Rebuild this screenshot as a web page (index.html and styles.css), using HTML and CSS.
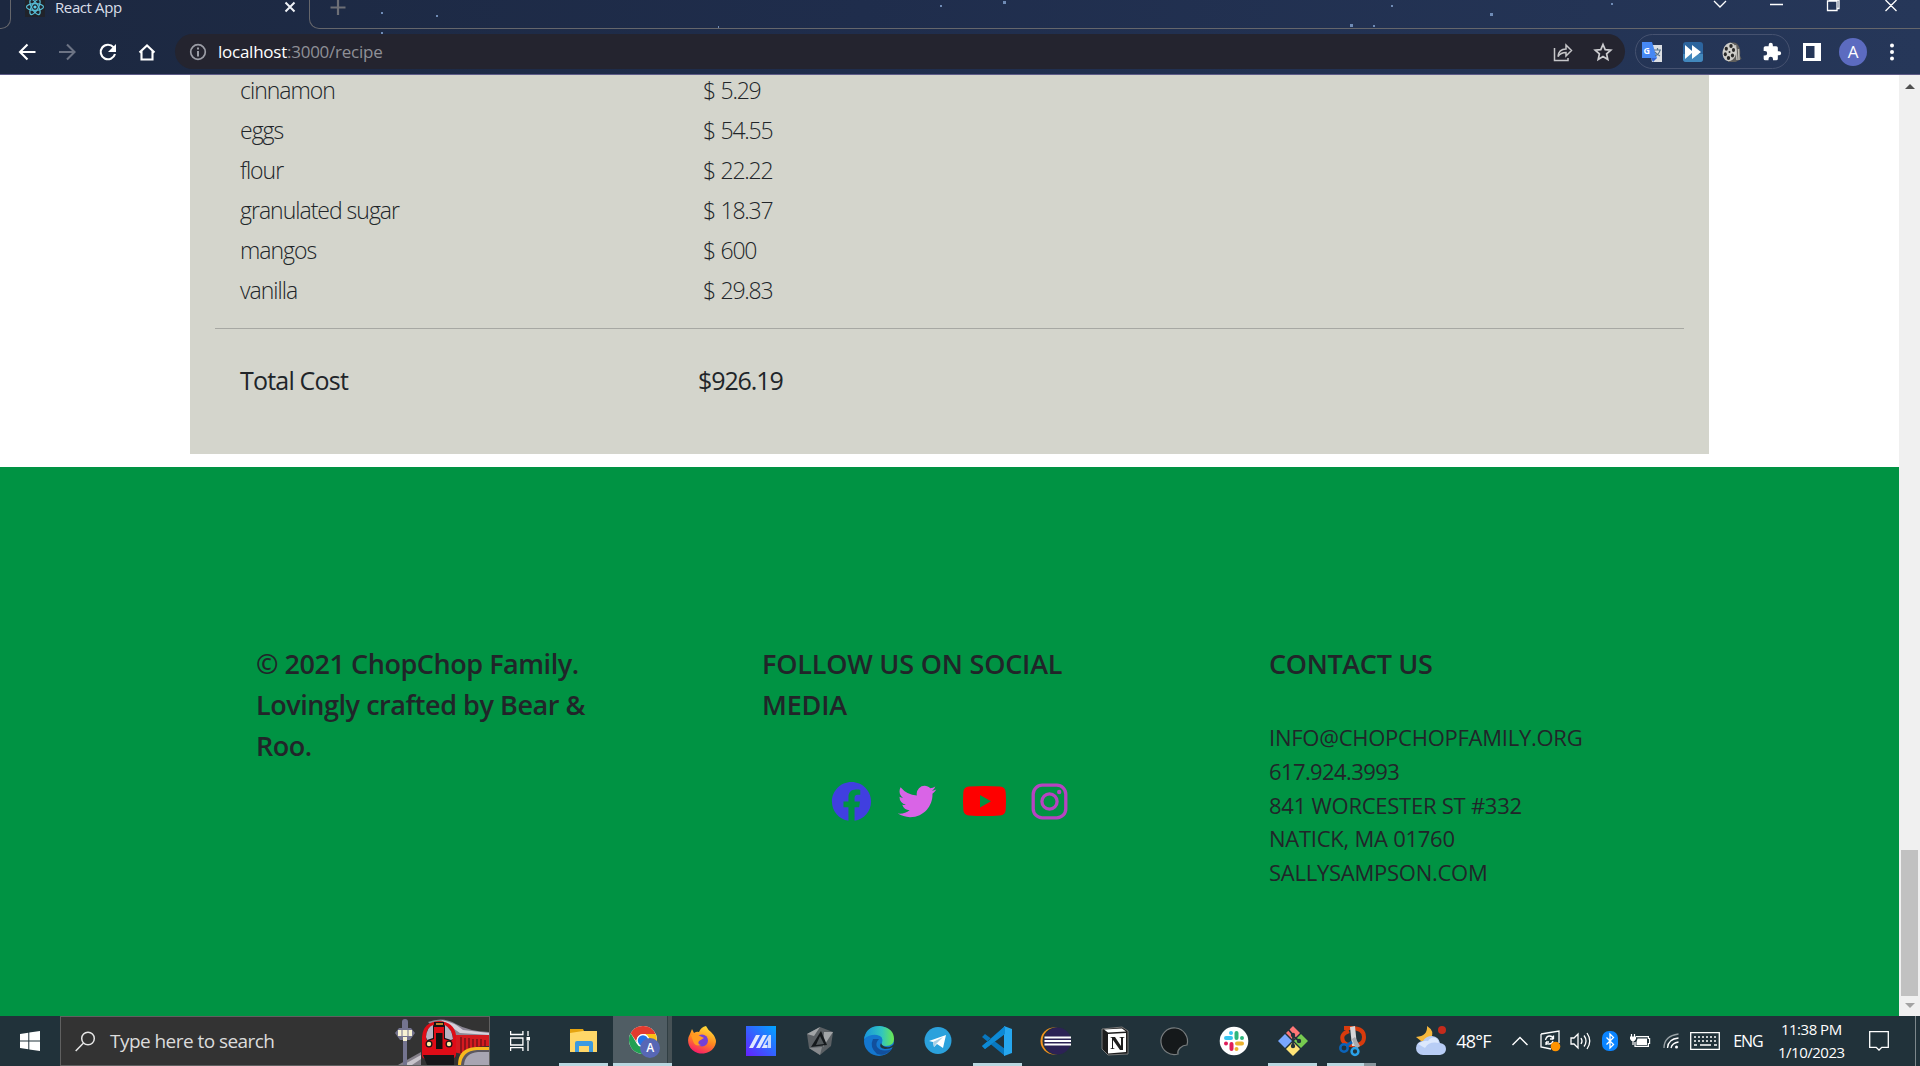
FILE: index.html
```html
<!DOCTYPE html>
<html lang="en">
<head>
<meta charset="utf-8">
<title>React App</title>
<link rel="stylesheet" href="styles.css">
</head>
<body>
<div class="screen">
  <header class="chrome">
    <svg class="stars" width="1920" height="36" viewBox="0 0 1920 36" fill="#6f8bb5"><path d="M381 12h2v2h-2zM436 15h2v2h-2zM381 32h2v2h-2zM718 26h1v2h-1zM940 5h2v2h-2zM1003 1h3v3h-3zM1350 24h3v3h-3zM1373 25h2v2h-2zM1391 5h2v2h-2zM1490 13h3v3h-3zM1611 3h2v2h-2z"/></svg>
    <div class="tabstrip">
      <div class="edge edge-left"></div>
      <div class="tab">
        <svg width="20" height="18" viewBox="0 0 20 18"><path fill="#20232a" d="M0 0h20v17H0z"/><g fill="none" stroke="#58bfd8" stroke-width="1.2"><ellipse cx="10" cy="7" rx="8.5" ry="3.3"/><ellipse cx="10" cy="7" rx="8.5" ry="3.3" transform="rotate(60 10 7)"/><ellipse cx="10" cy="7" rx="8.5" ry="3.3" transform="rotate(120 10 7)"/></g><circle cx="10" cy="7" r="1.6" fill="#58d2ef"/></svg>
        <span class="tab-title">React App</span>
        <svg class="tab-close" width="12" height="14" viewBox="0 0 12 14"><path d="M1.5 2.5l9 9m0-9l-9 9" stroke="#eef1f6" stroke-width="2"/></svg>
      </div>
      <div class="edge edge-right">
        <svg width="16" height="16" viewBox="0 0 16 16"><path d="M8 0v15M0.5 7.500h15" stroke="#6d6f76" stroke-width="2.200"/></svg>
        <svg width="190" height="14" viewBox="0 0 190 14" fill="none" stroke="#fff" stroke-width="1.3"><path d="M4 1l6 6 6-6M60 4.500h13M117.500 1h9.500v9.500h-9.500zM119 0h10v8.500h-2M175.500 0l11 11m0-11l-11 11"/></svg>
      </div>
    </div>
    <div class="toolbar">
      <svg class="nav" width="140" height="24" viewBox="0 0 140 24" fill="none" stroke="#fff" stroke-width="2.100"><path d="M17.500 12H2m7.500-7.500L2 12l7.500 7.500"/><path stroke="#6c7384" d="M41 12h15.500m-7.500-7.500l7.500 7.500-7.500 7.500"/><path d="M95.500 7.200A7.300 7.300 0 1 0 97 14"/><path fill="#fff" stroke="none" d="M98 4v8h-8z"/><path d="M121.500 12.500l7.500-7 7.500 7m-13-1.500v8.500h11V11"/></svg>
      <div class="omnibox">
        <svg width="18" height="18" viewBox="0 0 18 18"><circle cx="9" cy="9" r="7.300" fill="none" stroke="#9b9da6" stroke-width="1.700"/><path d="M8 4.500h2v2H8zM8 8h2v5.500H8z" fill="#9b9da6"/></svg>
        <span class="url"><span class="host">localhost</span>:3000/recipe</span>
        <svg class="share" width="20" height="20" viewBox="0 0 20 20" fill="none" stroke="#c6c6c9" stroke-width="1.500"><path d="M1.500 6v12.500H15V16M5 14.500c.5-5 3-7.500 8-7.500V3l5.500 5.500L13 14v-3.500c-4 0-6 1-8 4z"/></svg>
        <svg class="star" width="20" height="20" viewBox="0 0 20 20"><path d="M10 2.500l2.200 5.200 5.600.5-4.200 3.700 1.200 5.500-4.800-2.900-4.800 2.900 1.200-5.500-4.200-3.700 5.600-.5z" fill="none" stroke="#cdcdd0" stroke-width="1.700"/></svg>
      </div>
      <div class="extensions">
        <svg width="22" height="22" viewBox="0 0 22 22"><path fill="#dcdfe3" d="M8 4h13v17H11z"/><path fill="#3367d6" d="M10 17h6l-4 4z"/><path fill="#4688f4" d="M1 1h10l5 16H1z"/><text x="2.600" y="13" class="g-letter">G</text><path d="M13 9h7m-3.500-2v2m2.500 0c-.5 3-3 5-5 6m0-4c1 2 3 3 5 4" stroke="#57748c" stroke-width="1.200" fill="none"/></svg>
        <svg width="20" height="20" viewBox="0 0 20 20"><rect width="20" height="20" rx="3" fill="#2c649e"/><path fill="#4288bd" d="M0 12h20v5a3 3 0 0 1-3 3H3a3 3 0 0 1-3-3z"/><path fill="#fff" d="M2 3l7 6V3l9 7-9 7v-6l-7 6z"/></svg>
        <svg width="20" height="20" viewBox="0 0 20 20"><path fill="#5f5e5c" d="M7 .5h5c5 1 7 7 6 13l1.500 3.500-6 3H6z"/><path stroke="#bdbbb5" stroke-width="1.500" d="M13.500 3l1.500 15M16.500 7l.5 11" fill="none"/><ellipse cx="7.500" cy="10" rx="6.800" ry="9.300" transform="rotate(12 7.500 10)" fill="#cfceca"/><g fill="#282828"><ellipse cx="9" cy="4" rx="1.700" ry="2"/><ellipse cx="4.300" cy="6.800" rx="1.600" ry="2"/><ellipse cx="11.500" cy="8" rx="1.600" ry="2"/><ellipse cx="3.300" cy="12.300" rx="1.500" ry="2"/><ellipse cx="6.500" cy="16" rx="1.700" ry="2"/><ellipse cx="10.500" cy="13.500" rx="1.600" ry="2"/><circle cx="7.500" cy="10" r="1"/></g></svg>
        <svg width="20" height="20" viewBox="0 0 24 24" fill="#fff"><path d="M20.500 11H19V7a2 2 0 0 0-2-2h-4V3.500a2.500 2.500 0 0 0-5 0V5H4a2 2 0 0 0-2 2v3.800h1.500a2.700 2.700 0 0 1 0 5.400H2V20a2 2 0 0 0 2 2h3.800v-1.500a2.700 2.700 0 0 1 5.400 0V22H17a2 2 0 0 0 2-2v-4h1.500a2.500 2.500 0 0 0 0-5z"/></svg>
      </div>
      <svg class="panel" width="18" height="18" viewBox="0 0 18 18"><path fill="#fff" fill-rule="evenodd" d="M0 0h18v18H0zM3 3v12h8.500V3z"/></svg>
      <span class="avatar">A</span>
      <svg width="4" height="18" viewBox="0 0 4 18" fill="#fff"><circle cx="2" cy="2.500" r="2"/><circle cx="2" cy="9" r="2"/><circle cx="2" cy="15.500" r="2"/></svg>
    </div>
  </header>

  <div class="viewport">
    <main class="page">
      <section class="card">
        <div class="row"><span>cinnamon</span><span>$ 5.29</span></div>
        <div class="row"><span>eggs</span><span>$ 54.55</span></div>
        <div class="row"><span>flour</span><span>$ 22.22</span></div>
        <div class="row"><span>granulated sugar</span><span>$ 18.37</span></div>
        <div class="row"><span>mangos</span><span>$ 600</span></div>
        <div class="row"><span>vanilla</span><span>$ 29.83</span></div>
        <hr class="rule">
        <div class="total"><span>Total Cost</span><span class="total-value">$926.19</span></div>
      </section>
      <footer class="footer">
        <h3 class="heading credit">© 2021 ChopChop Family.<br>Lovingly crafted by Bear &amp;<br>Roo.</h3>
        <div>
          <h3 class="heading follow">FOLLOW US ON SOCIAL<br>MEDIA</h3>
          <div class="social">
            <svg viewBox="0 0 24 24" fill="#403fe0"><path d="M12.001 2.002c-5.522 0-9.999 4.477-9.999 9.999 0 4.990 3.656 9.126 8.437 9.879v-6.988h-2.540v-2.891h2.540V9.798c0-2.508 1.493-3.891 3.776-3.891 1.094 0 2.240.195 2.240.195v2.459h-1.264c-1.240 0-1.628.772-1.628 1.563v1.875h2.771l-.443 2.891h-2.328v6.988C18.344 21.129 22 16.992 22 12.001c0-5.522-4.477-9.999-9.999-9.999z"/></svg>
            <svg viewBox="0 0 24 24" fill="#d964e6"><path d="M19.633 7.997c.013.175.013.349.013.523 0 5.325-4.053 11.461-11.460 11.461-2.282 0-4.402-.661-6.186-1.809.324.037.636.050.973.050a8.070 8.070 0 0 0 5.001-1.721 4.036 4.036 0 0 1-3.767-2.793c.249.037.499.062.761.062.361 0 .724-.050 1.061-.137a4.027 4.027 0 0 1-3.230-3.953v-.050c.537.299 1.160.486 1.820.511a4.022 4.022 0 0 1-1.796-3.354c0-.748.199-1.434.548-2.032a11.457 11.457 0 0 0 8.306 4.215c-.062-.300-.100-.611-.100-.923a4.026 4.026 0 0 1 4.028-4.028c1.160 0 2.207.486 2.943 1.272a7.957 7.957 0 0 0 2.556-.973 4.020 4.020 0 0 1-1.771 2.220 8.073 8.073 0 0 0 2.319-.624 8.645 8.645 0 0 1-2.019 2.083z"/></svg>
            <svg viewBox="0 0 47 47" fill="#fe0000"><path fill-rule="evenodd" d="M9 8.500q15.500-1 31 0 5.500.3 5.700 6 .6 8.500 0 17-.2 5.700-5.700 6-15.500 1-31 0-5.500-.3-5.700-6-.6-8.500 0-17 .2-5.700 5.700-6zM20 17v12.500l11-6.250z"/></svg>
            <svg viewBox="0 0 47 47" fill="none" stroke="#b743c2" stroke-width="3.300"><rect x="7.200" y="7.200" width="32.600" height="32.600" rx="9"/><circle cx="23.500" cy="23.500" r="7.600"/><circle cx="33.200" cy="14" r="2.200" fill="#b743c2" stroke="none"/></svg>
          </div>
        </div>
        <div>
          <h3 class="heading contact-title">CONTACT US</h3>
          <p class="contact">INFO@CHOPCHOPFAMILY.ORG<br><span class="phone">617.924.3993</span><br>841 WORCESTER ST #332<br>NATICK, MA 01760<br>SALLYSAMPSON.COM</p>
        </div>
      </footer>
    </main>
    <div class="scrollbar">
      <svg width="10" height="6" viewBox="0 0 10 6"><path fill="#505050" d="M5 0l5 5H0z"/></svg>
      <div class="thumb"></div>
      <svg width="10" height="6" viewBox="0 0 10 6"><path fill="#a3a3a3" d="M0 0h10L5 5z"/></svg>
    </div>
  </div>

  <div class="taskbar">
    <div class="start"><svg width="20" height="20" viewBox="0 0 20 20" fill="#fff"><path d="M0 3l8.300-1.200v7.700H0zM9.300 1.600L20 0v9.500H9.300zM0 10.500h8.300v7.700L0 17zM9.300 10.500H20V20L9.300 18.400z"/></svg></div>
    <div class="search">
      <svg width="21" height="21" viewBox="0 0 21 21" fill="none" stroke="#e6e6e6" stroke-width="1.500"><circle cx="13" cy="7.500" r="6.300"/><path d="M8.500 12L.7 20"/></svg>
      <span class="search-text">Type here to search</span>
      <svg class="train" width="94" height="48" viewBox="0 0 94 48">
        <path fill="#85808a" d="M3 48l23-13v13z"/><path fill="#c8c4cb" d="M8 48l18-10v4l-9 6z"/>
        <path fill="#74748f" d="M7 5a3 3 0 0 1 6 0v6h3l4 5-5 7h-3v25H8V23H5l-5-7 4-5h3z"/><path fill="#f8f2d4" d="M3 13h14v6H3zM8 20h4v4H8z"/><path d="M7 12v8m6-8v8" stroke="#74748f"/>
        <path fill="#8c8795" d="M33 5q15-6 28 2 12 7 33 8v6H50z"/><path fill="#d5d0da" d="M46 3q13 2 22 10l26 3v2l-29-2z"/>
        <path fill="#d51a20" d="M58 18l36 0v11q-16-1-27 8l-9-2z"/><path d="M66 20v16m4-15v13m4-13v12m4-11v10m4-10v9m4-9v9m4-8v8" stroke="#751318" stroke-width="1.500"/>
        <path fill="#df0c17" d="M27 20Q28 5 44 4q15 1 17 14v20q-1 4-5 4H31q-4 0-4-4z"/>
        <path fill="#131317" d="M31 22q0-12 8-14v14l-6 2zM49 8q8 3 9 14l-2 2-7-2zM39 5h10v5H39z"/><path fill="#b9b2c2" d="M31 20q1-10 7-12v13l-6 2zM50 8q7 4 8 14l-2 1-6-2z"/><path fill="#111" d="M41 16h6.500v16H41z"/><circle cx="34" cy="27" r="3.500" fill="#15151a"/><circle cx="54" cy="27" r="3.500" fill="#15151a"/><circle cx="34" cy="27" r="2.200" fill="#ffe9a0"/><circle cx="54" cy="27" r="2.200" fill="#ffe9a0"/><path stroke="#f3ae35" stroke-width="1.500" d="M41 7h7"/>
        <path fill="#17171a" d="M28 38h31v10H32z"/><path fill="#f7b91e" d="M63 48q0-17 18-18h13v18z"/><path fill="#5b5760" d="M66 48q1-14 16-15h12v15z"/><path fill="#a8a5b2" d="M69 48q1-12 14-13h11v13z"/>
      </svg>
    </div>
    <svg class="taskview" width="20" height="20" viewBox="0 0 20 20" fill="none" stroke="#fff" stroke-width="1.300"><path d="M.6 0v3.500h12.300V0M.6 7h12.300v7H.6zM.6 20v-3.300h12.300V20M18 0v5m0 5v10"/><path fill="#fff" stroke="none" d="M16.500 6h3.500v3.500h-3.500z"/></svg>
    <div class="apps">
      <div class="app open"><svg viewBox="0 0 32 32"><path fill="#e6a410" d="M2 4h13l2 4H2z"/><path fill="#ffd768" d="M2 8l13-2h14v21H2z"/><path fill="#3c9ae0" d="M7 27V18q0-2 2-2h14q2 0 2 2v9h-4v-6H11v6z"/></svg></div>
      <div class="app open active"><svg viewBox="0 0 32 32"><circle cx="16" cy="15" r="14" fill="#fff"/><path fill="#e33b2e" d="M3.700 8.200A14 14 0 0 1 28.500 9H16a6.500 6.500 0 0 0-6 8.500z"/><path fill="#22a052" d="M3.700 8.200l6 10.300A6.500 6.500 0 0 0 19 21l-4 8A14 14 0 0 1 3.700 8.200z"/><path fill="#fbc116" d="M28.500 9A14 14 0 0 1 15 29l6-10.500A6.500 6.500 0 0 0 18 9z"/><circle cx="16" cy="15.500" r="6.500" fill="#fff"/><circle cx="16" cy="15.500" r="5.200" fill="#2573e5"/></svg><span class="badge">A</span></div>
      <div class="app"><svg viewBox="0 0 32 32"><defs><linearGradient id="fx" x1=".7" y1="0" x2=".3" y2="1"><stop offset="0" stop-color="#ffe13b"/><stop offset=".5" stop-color="#ff8a1e"/><stop offset="1" stop-color="#f7156d"/></linearGradient></defs><path fill="url(#fx)" d="M20 1q2 4 5 6 5 5 5 10A14 13 0 1 1 4 9l2-5 2 4q3-2 5-1 2-5 7-6z"/><circle cx="16" cy="15.500" r="6" fill="#7440d6"/><path fill="#ff9b21" d="M5 10q5-2 9 1l4 2-5 3q-2 3 2 4-6 2-8-4z"/></svg></div>
      <div class="app"><svg viewBox="0 0 32 32"><defs><linearGradient id="aw" x1="0" y1="1" x2="1" y2="0"><stop stop-color="#6520ff"/><stop offset="1" stop-color="#00a6ff"/></linearGradient></defs><path fill="url(#aw)" d="M1 1h30v30H1z"/><path fill="#dfe8ff" d="M4 23l7-13h4L8 23zM11 23l7-13h4l-7 13z"/><path fill="#c6d7fb" d="M18 20l6-10h2v13h-3v-8l-3 5z"/><path fill="#dfe8ff" d="M16.500 23l2-3h4v3z"/></svg></div>
      <div class="app"><svg viewBox="0 0 32 32"><path fill="#5b6064" d="M16 2l13 5-2 14-11 9-11-7L3 9z"/><path fill="#a2a5a7" d="M16 2L3 9l7 2zM20 7l-1 15 10-15z"/><path fill="#878a8d" d="M5 23l13-1-2 8z"/><path fill="#15191c" d="M17 6l6 14-16 2z"/><path fill="#52585b" d="M16 11l4 8-8 1z"/></svg></div>
      <div class="app"><svg viewBox="0 0 32 32"><defs><linearGradient id="ed"><stop stop-color="#1793dc"/><stop offset=".6" stop-color="#32c6bd"/><stop offset="1" stop-color="#6be94f"/></linearGradient></defs><circle cx="16" cy="16" r="15" fill="#1477cf"/><path fill="#124f9c" d="M10 14q-4 8 4 15 8 3 15-5-10 4-15-2-2-4 2-8z"/><path fill="url(#ed)" d="M1 14Q3 1 17 1q14 2 14 13 0 7-8 7-6 0-4-3 2-7-5-8-7-1-13 4z"/><path fill="#22333b" d="M18 18q-3 5 4 6 5 0 8-2l-1 3 3 1V18q-4 5-9 4-4-1-5-4z"/></svg></div>
      <div class="app"><svg viewBox="0 0 32 32"><circle cx="16" cy="15.500" r="13.500" fill="#2ba1dc"/><path fill="#fff" d="M7 16l17-6-3 13-6-4-3 3-1-5z"/><path fill="#a9d0e6" d="M11 17l10-5-7 7-2 3z"/></svg></div>
      <div class="app open"><svg viewBox="0 0 32 32"><path fill="#0877bf" d="M1 12l3-3 20 15v7zM1 21l3 3L24 8V1z"/><path fill="#26a7ef" d="M23 1l8 3v24l-8 3z"/><path fill="#0d8ad5" d="M1 21l3 3 4-3 16-12V1L12 12z"/></svg></div>
      <div class="app"><svg viewBox="0 0 32 32"><circle cx="14" cy="16" r="13.500" fill="#f7941e"/><circle cx="16" cy="16" r="13.500" fill="#21323a"/><circle cx="17.500" cy="16" r="13.500" fill="#2c2255"/><path fill="#fff" d="M4.500 11.500h26.500v2H4.500zM4.500 15h26.500v2H4.500zM4.500 18.500h26.500v2H4.500z"/></svg></div>
      <div class="app"><svg viewBox="0 0 32 32"><path fill="#1d1d1d" stroke="#777" d="M3 4l20-2 6 4v23l-20 1-6-6z"/><path fill="#fff" d="M5 4.500l18-1 4 3-18 1zM9 9l18-1v19L9 28.500z"/><path fill="#1d1d1d" d="M11 12h5l6 9v-8l-2-1h6l-2 1v12h-3l-7-10v8l2 1h-5l2-1v-10z"/></svg></div>
      <div class="app"><svg viewBox="0 0 32 32"><path fill="#15191b" stroke="#777c7e" stroke-width="1.200" d="M29 20A13.300 13.300 0 1 0 20 29q-1-3 2-6 3-3 7-3z"/></svg></div>
      <div class="app"><svg viewBox="0 0 32 32"><circle cx="16" cy="16" r="14.300" fill="#fff"/><g stroke-width="4" stroke-linecap="round"><path stroke="#36c5f0" d="M8 13h5M13 8.100h0"/><path stroke="#2eb67d" d="M18.500 8v5M24 13h0"/><path stroke="#ecb22e" d="M19 18.500h5M18.500 24h0"/><path stroke="#e01e5a" d="M13.500 19v5M8 18.500h0"/></g></svg></div>
      <div class="app open"><svg viewBox="0 0 32 32"><path fill="#ff7777" d="M16 1l7 7-7 7-7-7z"/><path fill="#79a7ff" d="M8 9l7 7-7 7-7-7z"/><path fill="#77cb50" d="M24 9l7 7-7 7-7-7z"/><path fill="#ffe477" d="M16 17l7 7-7 7-7-7z"/><path stroke="#21323a" stroke-width="1.800" fill="none" d="M11 4l5 6v12M16 11l6 5"/><g fill="#21323a"><circle cx="16" cy="10" r="2.200"/><circle cx="16" cy="21" r="2.200"/><circle cx="22" cy="16" r="2.200"/></g></svg></div>
      <div class="app open grouped"><svg viewBox="0 0 32 32"><path fill="none" stroke="#d83b0d" stroke-width="4" d="M8 3h7q13 0 13 9 0 8-9 8-9 1-12-4-3-7 6-10"/><path fill="#d6d6d8" d="M14 2l5-1 2 20h-5z"/><path fill="#a9abb0" d="M16 14l3-2 5 9-4 3z"/><circle cx="8" cy="23" r="3.700" fill="none" stroke="#0b63b9" stroke-width="2.500"/><circle cx="19" cy="26.500" r="3.400" fill="none" stroke="#2aa1e9" stroke-width="2.500"/><path stroke="#0b63b9" stroke-width="3" d="M10 21l6-4"/></svg></div>
    </div>
    <div class="tray">
      <svg width="30" height="30" viewBox="0 0 30 30"><path fill="#f5b83d" d="M11 0q8 5 4 12-3 6-10 3l-5-4q12-1 11-11z"/><path fill="#b8cdf5" d="M7 29a7 7 0 0 1 0-14q3-5 9-5 7 1 8 7 6 1 6 6t-6 6z"/><path fill="#dce8fd" d="M2 18q5-4 10-3 3-5 8-3 3 2 3 5-10-2-14 5z"/><circle cx="26" cy="4" r="4" fill="#c42b1c"/></svg>
      <span class="temp">48°F</span>
      <svg class="caret" width="16" height="10" viewBox="0 0 16 10"><path d="M.5 9L8 1.500 15.500 9" fill="none" stroke="#fff" stroke-width="1.400"/></svg>
      <svg class="sync" width="21" height="22" viewBox="0 0 21 22" fill="none" stroke="#fff" stroke-width="1.300"><path d="M1 4l18-3v12M1 4v13l10 2M5.500 10q1-4 4-4t4 3V5.500M13.500 9H10M13 11q-1 3-4 3t-3-2v3M6 12h3"/><circle cx="15.500" cy="16.500" r="4.800" fill="#ff9300" stroke="none"/></svg>
      <svg class="sound" width="21" height="20" viewBox="0 0 21 20" fill="none" stroke="#fff" stroke-width="1.300"><path d="M1 7h3l4-4v14l-4-4H1zM11 7q2 3 0 6"/><path d="M14 4.500q4 5.500 0 11M17 2q5.500 8 0 16"/></svg>
      <svg class="bt" width="16" height="20" viewBox="0 0 16 20"><rect width="16" height="20" rx="7" fill="#0a84ff"/><path d="M4.500 6.500l7 7L8 17V3l3.500 3.500-7 7" fill="none" stroke="#fff" stroke-width="1.300"/></svg>
      <svg class="battery" width="21" height="14" viewBox="0 0 21 14"><path fill="none" stroke="#fff" stroke-width="1.200" d="M6 2.600h12.400v1.900h1.200v5h-1.200v2.900H5V8M1.500 0v3m3-3v3M3 7v4"/><path fill="#fff" d="M0 2.500h6V5L4.500 7h-3L0 5zM7.500 4.500H17V11H6.500V8z"/></svg>
      <svg class="wifi" width="16" height="16" viewBox="0 0 16 16" fill="none" stroke="#fff" stroke-width="1.300"><path stroke="#9aa3a7" d="M1 15Q1 3 15.500 1"/><path d="M4.500 15Q5 6 15.500 5M8 15q1-5 7.500-6"/><circle cx="13.500" cy="14" r="1.500" fill="#fff" stroke="none"/></svg>
      <svg class="keyboard" width="30" height="18" viewBox="0 0 30 18" fill="none" stroke="#fff" stroke-width="1.300"><path d="M.7.700h28.600v16.600H.7z"/><path stroke-dasharray="2 2" d="M4 5h23M4 9h23"/><path d="M4 13h3m3 0h11m3 0h3"/></svg>
      <span class="lang">ENG</span>
      <span class="clock">11:38 PM<br>1/10/2023</span>
      <svg class="notice" width="20" height="21" viewBox="0 0 20 21"><path fill="none" stroke="#fff" stroke-width="1.300" d="M.7.700h18.600v15.600h-6.500L10 19l-2.800-2.700H.7z"/></svg>
      <span class="peek"></span>
    </div>
  </div>
</div>
</body>
</html>
```
FILE: styles.css
```css
* { box-sizing: border-box; }
body { margin: 0; font-family: "Open Sans", "Noto Sans", sans-serif; }
svg { display: block; flex: none; }
.screen { width: 1920px; height: 1066px; display: flex; flex-direction: column; overflow: hidden; }

.chrome { position: relative; height: 75px; border-bottom: 1px solid #5c5a86; background: linear-gradient(90deg, #1c2840, #1f2d4c 45%, #263759); }
.stars { position: absolute; left: 0; top: 0; }
.tabstrip { height: 29px; display: flex; }
.edge { border-bottom: 1px solid #65666b; }
.edge-left { width: 11px; border-right: 1px solid #65666b; border-radius: 0 0 10px 0; }
.edge-right { flex: 1; padding: 0 20px 0 20px; border-left: 1px solid #65666b; border-radius: 0 0 0 10px; display: flex; justify-content: space-between; }
.tab { width: 298px; padding-left: 14px; display: flex; align-items: flex-start; }
.tab-title { margin-left: 10px; width: 230px; font-size: 15px; line-height: 14px; letter-spacing: -.4px; color: #d9dee8; }
.tab-close { margin-left: -1px; }
.toolbar { height: 45px; display: flex; align-items: center; }
.nav { margin-left: 18px; }
.omnibox { margin-left: 17px; width: 1450px; height: 35px; border-radius: 18px; background: #24242f; display: flex; align-items: center; padding-left: 14px; }
.url { flex: 1; margin-left: 11px; font-size: 17px; letter-spacing: -.25px; color: #8f9097; }
.host { color: #fff; }
.share { margin-right: 20px; }
.star { margin-right: 12px; }
.extensions { margin-left: 10px; width: 155px; height: 35px; border: 1px solid #465270; border-radius: 18px; display: flex; align-items: center; justify-content: space-between; padding: 0 7px 0 5px; }
.g-letter { font: 700 9px "Open Sans", sans-serif; fill: #fff; }
.panel { margin-left: 13px; }
.avatar { margin: 0 23px 0 18px; width: 28px; height: 28px; border-radius: 50%; background: #5c6bc0; color: #fff; font-size: 17px; line-height: 28px; text-align: center; }

.viewport { height: 941px; display: flex; }
.page { width: 1899px; background: #fff; overflow: hidden; color: #212529; }
.card { margin-left: 190px; width: 1519px; height: 379px; padding: 0 25px; background: #d4d5cc; overflow: hidden; }
.row { display: grid; grid-template-columns: 463px auto; padding-left: 25px; height: 40px; line-height: 41px; font-size: 23px; font-weight: 300; letter-spacing: -1px; }
.row span + span { letter-spacing: -1.25px; word-spacing: 1px; }
.row:first-child { margin-top: -5px; }
.rule { margin: 18px 0 31px; border: 0; height: 1px; background: #a7a8a3; }
.total { display: grid; grid-template-columns: 458px auto; padding-left: 25px; height: 40px; line-height: 41px; font-size: 25px; letter-spacing: -.8px; }
.total-value { letter-spacing: -1.1px; }
.footer { margin-top: 13px; height: 549px; padding: 176px 0 0 256px; background: #009343; display: grid; grid-template-columns: 506px 507px auto; align-items: start; }
.heading { margin: 0; font-size: 27px; line-height: 41px; font-weight: 600; letter-spacing: -.45px; white-space: nowrap; }
.follow { letter-spacing: -.2px; }
.contact-title { letter-spacing: -.35px; }
.social { display: flex; gap: 19px; margin: 53px 0 0 66px; }
.social svg { width: 47px; height: 47px; }
.contact { margin: 37px 0 0; font-size: 22px; line-height: 33.75px; letter-spacing: -.25px; white-space: nowrap; }
.phone { letter-spacing: -.6px; }
.scrollbar { width: 21px; padding: 9px 0 7px; background: #f0f0f0; display: flex; flex-direction: column; align-items: center; }
.thumb { width: 17px; height: 146px; margin: auto 0 7px; background: #c1c1c1; }

.taskbar { height: 50px; background: #21323a; display: flex; align-items: center; color: #fff; }
.start { width: 60px; padding-left: 20px; }
.search { width: 430px; height: 50px; background: #333; border: 1px solid #606060; display: flex; align-items: center; padding-left: 14px; }
.search-text { width: 286px; margin-left: 14px; font-size: 19px; letter-spacing: -.55px; color: #dcdcdc; }
.taskview { margin-left: 20px; }
.apps { margin-left: 24px; height: 50px; display: grid; grid-template-columns: repeat(14, 59.1px); }
.app { position: relative; display: flex; justify-content: center; padding-top: 9px; }
.app svg { width: 32px; height: 32px; }
.open::after { content: ""; position: absolute; left: 5px; bottom: 0; width: 49px; height: 3px; background: #b9d7e0; }
.active { background: linear-gradient(90deg, #505d64 54px, #303e43 54px, #303e43 55px, #465155 55px); }
.active::after { left: 0; width: 100%; }
.grouped::after { background: linear-gradient(90deg, #b9d7e0 37px, #87969d 37px); }
.badge { position: absolute; left: 27px; top: 22px; width: 20px; height: 20px; border-radius: 50%; background: #5767b5; font-size: 12px; line-height: 20px; text-align: center; font-weight: 600; }
.tray { margin-left: 35px; height: 50px; display: flex; align-items: center; }
.temp { width: 36px; margin-left: 10px; font-size: 18px; letter-spacing: -.8px; }
.caret { margin-left: 20px; }
.sync { margin-left: 12px; }
.sound { margin-left: 9px; }
.bt { margin-left: 11px; }
.battery { margin-left: 12px; }
.wifi { margin-left: 12px; }
.keyboard { margin-left: 11px; }
.lang { width: 28px; margin-left: 13px; font-size: 16px; letter-spacing: -1.1px; }
.clock { width: 68px; margin-left: 16px; font-size: 15px; line-height: 23px; letter-spacing: -.5px; text-align: center; white-space: nowrap; }
.notice { margin-left: 24px; }
.peek { margin-left: 26px; width: 1px; height: 50px; background: #7d878b; }
```
